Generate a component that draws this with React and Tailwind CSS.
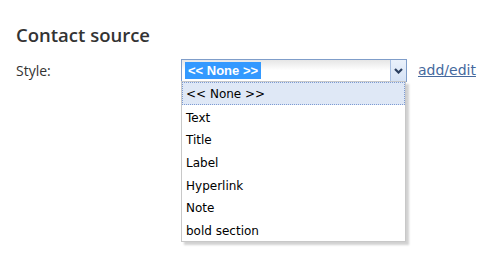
import React from "react";

export default function App() {
  const items = ["Text", "Title", "Label", "Hyperlink", "Note", "bold section"];
  return (
    <div className="w-[500px] h-[265px] bg-white pl-4 pt-[24px]" style={{ fontFamily: "'DejaVu Sans', Tahoma, sans-serif" }}>
      <h1 className="text-[18.5px] leading-[22px] font-semibold text-[#333333]" style={{ fontFamily: "'Open Sans', sans-serif" }}>Contact source</h1>
      <div className="flex items-start mt-[13px]">
        <div className="w-[165px] text-[14px] leading-[23px] text-[#333333]" style={{ fontFamily: "'Open Sans', sans-serif" }}>Style:</div>
        <div className="relative">
          <div className="flex w-[226px] h-[23px] border border-[#7f9dc9] bg-gradient-to-b from-[#e6e6e6] via-[#ffffff] to-[#ffffff]">
            <div className="flex-1 flex items-center pl-[3px]">
              <span className="bg-[#3399ff] text-white text-[13px] font-bold leading-[17px] px-[3px]" style={{ fontFamily: "'Liberation Sans', Arial, sans-serif" }}>&lt;&lt; None &gt;&gt;</span>
            </div>
            <div className="w-[16px] h-full border-l border-[#a9c0e2] bg-gradient-to-b from-[#eaf1fb] to-[#d6e3f6] flex items-center justify-center">
              <svg width="9" height="6" viewBox="0 0 9 6">
                <path d="M1 1 L4.5 4.5 L8 1" stroke="#2b3f60" strokeWidth="2.2" fill="none" />
              </svg>
            </div>
          </div>
          <div className="absolute left-0 top-[22px] w-[225px] bg-white border border-[#c8c8c8] shadow-[3px_3px_2px_rgba(0,0,0,0.18)]">
            <div className="h-[23px] bg-[#dfe8f6] border border-dotted border-[#7d9bd3] flex items-center pl-[3px] pt-[1px] text-[12px] text-black">&lt;&lt; None &gt;&gt;</div>
            {items.map((t) => (
              <div key={t} className="h-[22.6px] flex items-center pl-[4px] pt-[3px] text-[12px] text-black">{t}</div>
            ))}
          </div>
        </div>
        <a href="#" className="ml-[11px] text-[14px] leading-[23px] text-[#45699e] underline">add/edit</a>
      </div>
    </div>
  );
}
